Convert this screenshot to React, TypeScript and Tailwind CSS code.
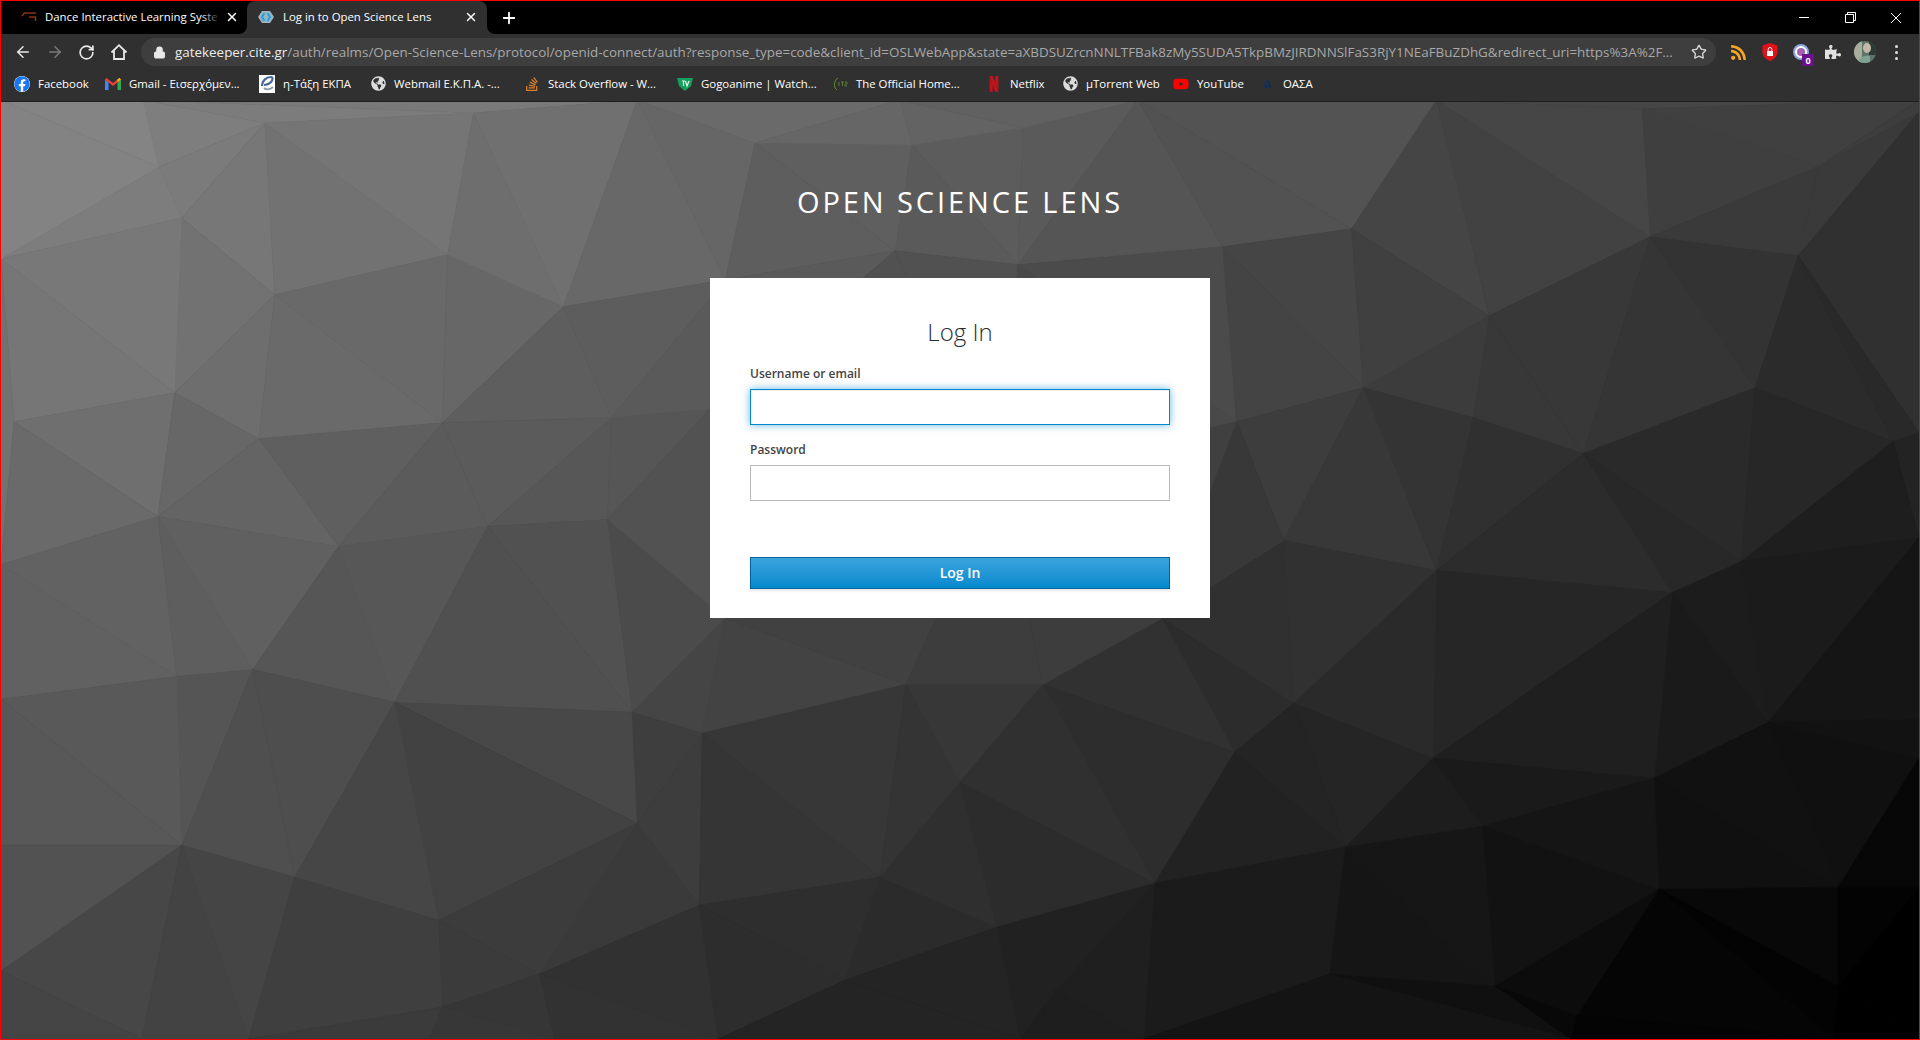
import { ArrowLeft, ArrowRight, RotateCw, Lock, Star, X, Plus } from 'lucide-react';
import { FaFacebook, FaStackOverflow, FaGlobeAmericas, FaRss, FaYoutube, FaPuzzlePiece } from 'react-icons/fa';
import { SiNetflix } from 'react-icons/si';

type Pt = [number, number];

// Corners of the low-poly backdrop, read off the screenshot in page coordinates
const POINTS: Pt[] = [
  [264, 123], [158, 167], [142, 100], [181, 218], [274, 295], [174, 393], [0, 259], [13, 422], [258, 439], [157, 517],
  [0, 565], [176, 677], [0, 700], [252, 670], [338, 547], [442, 423], [447, 255], [473, 113], [637, 100], [563, 307],
  [611, 418], [487, 527], [607, 520], [394, 703], [632, 713], [702, 734], [725, 280], [755, 143], [710, 409], [725, 619],
  [906, 685], [637, 824], [438, 921], [294, 878], [181, 846], [0, 846], [141, 1040], [0, 972], [248, 1040], [442, 1008],
  [539, 975], [699, 906], [880, 878], [845, 981], [718, 1040], [554, 1040], [429, 1040], [912, 145], [895, 251],
  [1023, 128], [1018, 265], [1223, 247], [1352, 229], [1138, 100], [1437, 100], [1490, 316], [1364, 388], [1237, 422],
  [1284, 541], [1474, 418], [1584, 454], [1437, 571], [1651, 237], [1643, 109], [1820, 166], [1920, 112], [1799, 256],
  [1756, 388], [1894, 442], [1920, 433], [1742, 562], [1673, 593], [1920, 538], [1769, 723], [1920, 720], [1655, 779],
  [1433, 759], [1294, 704], [1235, 753], [1043, 685], [1162, 619], [960, 783], [1155, 884], [1346, 848], [1483, 827],
  [1660, 890], [1839, 888], [1920, 759], [1330, 975], [1496, 987], [1578, 1017], [1839, 987], [997, 928], [1055, 993],
  [1021, 1040], [1144, 1040], [1572, 1040], [1835, 1040], [0, 100], [1920, 100], [0, 1040], [1920, 1040], [1920, 888],
  [900, 100], [1000, 480],
];

function facets(points: Pt[]) {
  const all: Pt[] = [...points, [-5000, -5000], [8000, -5000], [960, 9000]];
  const n = points.length;
  let tris: number[][] = [[n, n + 1, n + 2]];

  const inCircle = (t: number[], p: Pt) => {
    const [a, b, c] = t.map((i) => all[i]);
    const d = 2 * (a[0] * (b[1] - c[1]) + b[0] * (c[1] - a[1]) + c[0] * (a[1] - b[1]));
    const a2 = a[0] * a[0] + a[1] * a[1];
    const b2 = b[0] * b[0] + b[1] * b[1];
    const c2 = c[0] * c[0] + c[1] * c[1];
    const x = (a2 * (b[1] - c[1]) + b2 * (c[1] - a[1]) + c2 * (a[1] - b[1])) / d;
    const y = (a2 * (c[0] - b[0]) + b2 * (a[0] - c[0]) + c2 * (b[0] - a[0])) / d;
    return (p[0] - x) ** 2 + (p[1] - y) ** 2 < (a[0] - x) ** 2 + (a[1] - y) ** 2;
  };

  points.forEach((p, i) => {
    const bad = tris.filter((t) => inCircle(t, p));
    const edges = new Map<string, number[]>();
    for (const t of bad) {
      for (const [u, v] of [[t[0], t[1]], [t[1], t[2]], [t[2], t[0]]]) {
        const key = u < v ? `${u}-${v}` : `${v}-${u}`;
        if (edges.has(key)) edges.delete(key);
        else edges.set(key, [u, v]);
      }
    }
    tris = tris.filter((t) => !bad.includes(t));
    for (const [u, v] of edges.values()) tris.push([u, v, i]);
  });

  return tris.filter((t) => t.every((i) => i < n)).map((t) => t.map((i) => all[i]));
}

function Backdrop() {
  const polys = facets(POINTS);
  return (
    <svg className="absolute inset-0 h-full w-full" viewBox="0 102 1920 938" preserveAspectRatio="none">
      <rect x="0" y="0" width="1920" height="1040" fill="#333" />
      {polys.map((p, i) => {
        const cx = (p[0][0] + p[1][0] + p[2][0]) / 3;
        const cy = (p[0][1] + p[1][1] + p[2][1]) / 3;
        const jitter = (((i * 37) % 9) - 4) * 0.55;
        const v = Math.max(0, Math.min(255, Math.round(144.6 - 0.041 * cx - 0.07 * cy + jitter)));
        const fill = `rgb(${v},${v},${v})`;
        return <polygon key={i} points={p.map((q) => q.join(',')).join(' ')} fill={fill} stroke={fill} strokeWidth="0.6" />;
      })}
    </svg>
  );
}

function HomeIcon() {
  return (
    <svg width="18" height="18" viewBox="0 0 18 18" fill="none" stroke="#e8e8e8" strokeWidth="1.8">
      <path d="M1.5 9.5 9 2.2l7.5 7.3M4 7.5V16h10V7.5" />
    </svg>
  );
}

function KeycloakFavicon() {
  return (
    <svg width="16" height="16" viewBox="0 0 16 16">
      <path d="M4 2h8l4 6-4 6H4L0 8z" fill="#9fb4bf" />
      <path d="M6.5 4 4 8l2.5 4M9.5 4 12 8l-2.5 4" fill="none" stroke="#18a4e0" strokeWidth="2" />
    </svg>
  );
}

function DanceFavicon() {
  return (
    <svg width="16" height="16" viewBox="0 0 16 16" fill="none" stroke="#8a3212" strokeWidth="1.6">
      <path d="M15 4H3.5L1 7M8 8h6.5v4" />
    </svg>
  );
}

function GmailIcon() {
  return (
    <svg width="16" height="12" viewBox="0 0 16 12">
      <path d="M0 1.5V12h3.5V4z" fill="#4285f4" />
      <path d="M16 1.5V12h-3.5V4z" fill="#34a853" />
      <path d="M0 1.5 1.5 0 8 5l6.500-5L16 1.500 8 8z" fill="#ea4335" />
      <path d="M12.500 4V1.200L14.500 0 16 1.500z" fill="#fbbc04" />
    </svg>
  );
}

function ETaxiIcon() {
  return (
    <svg width="16" height="18" viewBox="0 0 16 18">
      <rect width="16" height="18" fill="#fff" />
      <path d="M3 11c0-5 4-9 9-9 2 0 2 3 0 5-2 2-5 3-7 3" fill="none" stroke="#47699a" strokeWidth="2.2" />
      <path d="M5 13c2 2 6 2 9-1" fill="none" stroke="#8d9aa8" strokeWidth="1.8" />
    </svg>
  );
}

function GlobeIcon() {
  return <FaGlobeAmericas className="h-[15px] w-[15px] text-[#dcdcdc]" />;
}

function GogoIcon() {
  return (
    <svg width="16" height="16" viewBox="0 0 16 16">
      <path d="M0 2h16l-2 8-6 5-6-5z" fill="#12a05c" />
      <path d="M5 5h3M6.500 5v5M8.500 5l1.500 5 2-5" fill="none" stroke="#e8f5ee" strokeWidth="1.2" />
    </svg>
  );
}

function YtsIcon() {
  return (
    <svg width="16" height="16" viewBox="0 0 16 16" fill="none" stroke="#5f8f34" strokeWidth="1">
      <path d="M6 2C2 4 1 11 5 14" />
      <path d="M7 6v4M9 6h3M10.500 6v4M13 6h2v2h-2v2h2" strokeWidth="0.8" />
    </svg>
  );
}

function OasaIcon() {
  return (
    <div className="flex h-4 w-4 items-center justify-center">
      <span className="font-['Liberation_Sans',sans-serif] text-[13px] leading-none font-bold text-[#0d2f5e]">a</span>
    </div>
  );
}

function ShieldIcon() {
  return (
    <svg width="16" height="18" viewBox="0 0 16 18">
      <path d="M8 0l7.500 2.500V9c0 4-3 7-7.500 9C3.500 16 .5 13 .5 9V2.500z" fill="#e3101a" />
      <path d="M5 8h6v5H5z" fill="#fff" />
      <path d="M6.200 8V6.300a1.800 1.800 0 0 1 3.600 0V8" fill="none" stroke="#fff" strokeWidth="1" />
    </svg>
  );
}

function ProfileAvatar() {
  return (
    <svg width="22" height="22" viewBox="0 0 22 22">
      <defs>
        <clipPath id="avatar-clip"><circle cx="11" cy="11" r="11" /></clipPath>
      </defs>
      <g clipPath="url(#avatar-clip)">
        <rect width="22" height="22" fill="#5f7468" />
        <rect x="0" width="8" height="22" fill="#a9ad9e" />
        <rect x="15" width="7" height="14" fill="#2c3a34" />
        <ellipse cx="13" cy="7" rx="4" ry="5" fill="#c4b8a8" />
        <path d="M4 22c1-6 6-8 12-7v7z" fill="#7ea392" />
      </g>
    </svg>
  );
}

const BOOKMARKS = [
  { label: 'Facebook', icon: <FaFacebook className="h-4 w-4 rounded-full bg-white text-[#1877f2]" />, cls: 'w-[91px]' },
  { label: 'Gmail - Εισερχόμεν...', icon: <GmailIcon />, cls: 'w-[154px]' },
  { label: 'η-Τάξη ΕΚΠΑ', icon: <ETaxiIcon />, cls: 'w-[111px]' },
  { label: 'Webmail Ε.Κ.Π.Α. -...', icon: <GlobeIcon />, cls: 'w-[154px]' },
  { label: 'Stack Overflow - W...', icon: <FaStackOverflow className="h-4 w-4 text-[#d9802e]" />, cls: 'w-[153px]' },
  { label: 'Gogoanime | Watch...', icon: <GogoIcon />, cls: 'w-[155px]' },
  { label: 'The Official Home...', icon: <YtsIcon />, cls: 'w-[154px]' },
  { label: 'Netflix', icon: <SiNetflix className="h-4 w-4 text-[#c5121c]" />, cls: 'w-[76px]' },
  { label: 'µTorrent Web', icon: <GlobeIcon />, cls: 'w-[111px]' },
  { label: 'YouTube', icon: <FaYoutube className="h-4 w-4 text-[#f00]" />, cls: 'w-[86px]' },
  { label: 'ΟΑΣΑ', icon: <OasaIcon />, cls: 'w-[60px]' },
];

function TabStrip() {
  return (
    <div className="flex h-[33px] items-end bg-black">
      <div className="relative flex h-[33px] w-[246px] items-center pb-px pl-[11px]">
        <span className="ml-[9px] flex w-4 items-center justify-center"><DanceFavicon /></span>
        <span className="ml-2 w-[172px] overflow-hidden text-[11.4px] whitespace-nowrap text-white">Dance Interactive Learning System</span>
        <span className="absolute top-0 left-[200px] h-full w-[20px] bg-gradient-to-r from-transparent to-black" />
        <X className="absolute left-[224px] h-[14px] w-[14px] text-white" strokeWidth={2.5} />
      </div>
      <div className="relative flex h-[33px] w-[240px] items-center rounded-t-lg bg-[#303030] pb-px pl-[11px]">
        <span className="absolute bottom-0 -left-2 h-2 w-2 bg-[#303030]"><span className="block h-full w-full rounded-br-lg bg-black" /></span>
        <span className="absolute -right-2 bottom-0 h-2 w-2 bg-[#303030]"><span className="block h-full w-full rounded-bl-lg bg-black" /></span>
        <KeycloakFavicon />
        <span className="ml-[9px] text-[11.4px] whitespace-nowrap text-white">Log in to Open Science Lens</span>
        <X className="absolute left-[217px] h-[14px] w-[14px] text-white" strokeWidth={2.5} />
      </div>
      <div className="flex h-[33px] items-center pl-[13px]">
        <Plus className="h-[18px] w-[18px] text-white" strokeWidth={2.4} />
      </div>
      <div className="ml-auto flex h-[33px] items-center">
        <div className="flex w-[46px] justify-center"><span className="h-px w-[10px] bg-white" /></div>
        <div className="flex w-[46px] justify-center">
          <svg width="11" height="11" viewBox="0 0 11 11" fill="none" stroke="#fff"><path d="M.5 2.500h8v8h-8zM2.500 2.500v-2h8v8h-2" /></svg>
        </div>
        <div className="flex w-[46px] justify-center">
          <svg width="12" height="12" viewBox="0 0 12 12" fill="none" stroke="#fff"><path d="M1 1l10 10M11 1 1 11" /></svg>
        </div>
      </div>
    </div>
  );
}

function Toolbar() {
  return (
    <div className="flex h-[36px] items-center bg-[#303030] pl-[13px]">
      <ArrowLeft className="h-[18px] w-[18px] text-[#e8e8e8]" strokeWidth={2} />
      <ArrowRight className="ml-[14px] h-[18px] w-[18px] text-[#7a7a7a]" strokeWidth={2} />
      <RotateCw className="ml-[14px] h-[17px] w-[17px] text-[#e8e8e8]" strokeWidth={2.4} />
      <span className="ml-[15px] flex"><HomeIcon /></span>
      <div className="ml-[13px] flex h-7 w-[1575px] items-center rounded-full bg-[#3e3e3e] pl-[12px]">
        <Lock className="h-[13px] w-[13px] fill-[#e8e8e8] text-[#e8e8e8]" />
        <span className="ml-[9px] w-[1510px] overflow-hidden pt-px text-[13.41px] whitespace-nowrap text-[#a8a8a8]">
          <span className="text-[#ececec]">gatekeeper.cite.gr</span>/auth/realms/Open-Science-Lens/protocol/openid-connect/auth?response_type=code&amp;client_id=OSLWebApp&amp;state=aXBDSUZrcnNNLTFBak8zMy5SUDA5TkpBMzJIRDNNSlFaS3RjY1NEaFBuZDhG&amp;redirect_uri=https%3A%2F...
        </span>
        <Star className="ml-auto mr-[9px] h-4 w-4 text-[#d8d8d8]" strokeWidth={2} />
      </div>
      <div className="flex flex-1 items-center">
        <FaRss className="ml-[14px] h-[17px] w-[17px] text-[#f5a623]" />
        <span className="ml-[15px] flex"><ShieldIcon /></span>
        <div className="relative ml-[15px] flex h-4 w-4 items-center justify-center rounded-full border-2 border-[#8aa6d8] bg-white">
          <span className="h-2 w-2 rounded-full bg-[#a060b0]" />
          <span className="absolute -right-[7px] -bottom-[8px] flex h-3 w-[12px] items-center justify-center bg-[#6a0f8e] text-[9px] leading-none font-bold text-white">0</span>
        </div>
        <FaPuzzlePiece className="ml-[16px] h-4 w-4 text-[#e0e0e0]" />
        <span className="ml-[13px] flex"><ProfileAvatar /></span>
        <span className="ml-[19px] flex flex-col gap-[3px]">
          <span className="h-[3px] w-[3px] rounded-full bg-[#e0e0e0]" />
          <span className="h-[3px] w-[3px] rounded-full bg-[#e0e0e0]" />
          <span className="h-[3px] w-[3px] rounded-full bg-[#e0e0e0]" />
        </span>
      </div>
    </div>
  );
}

function BookmarksBar() {
  return (
    <div className="flex h-[32px] items-center border-b border-[#1f1f1f] bg-[#303030] pb-[3px] pl-[13px]">
      {BOOKMARKS.map((b) => (
        <div key={b.label} className={`flex items-center ${b.cls}`}>
          <span className="flex w-4 justify-center">{b.icon}</span>
          <span className="ml-2 text-[11.4px] whitespace-nowrap text-white">{b.label}</span>
        </div>
      ))}
    </div>
  );
}

function LoginCard() {
  return (
    <div className="mx-auto mt-[59px] h-[340px] w-[500px] bg-white px-10 pt-[37px]">
      <h1 className="text-center text-2xl leading-[33px] font-light text-[#292e34]">Log In</h1>
      <label className="mt-[17px] block text-xs leading-[18px] font-semibold text-[#444444]">Username or email</label>
      <input
        autoFocus
        className="mt-[6px] block h-9 w-full border border-[#0088ce] bg-white shadow-[inset_0_1px_1px_rgba(3,3,3,0.075),0_0_8px_rgba(0,136,206,0.6)] outline-none"
      />
      <label className="mt-[16px] block text-xs leading-[18px] font-semibold text-[#444444]">Password</label>
      <input type="password" className="mt-[6px] block h-9 w-full border border-[#bbbbbb] bg-white outline-none" />
      <button className="mt-[56px] block h-8 w-full border border-[#00659c] bg-gradient-to-b from-[#39a5dc] to-[#0088ce] text-sm font-semibold text-white shadow-[0_2px_3px_rgba(3,3,3,0.1)]">
        Log In
      </button>
    </div>
  );
}

export default function App() {
  return (
    <div className="flex h-[1040px] w-full flex-col overflow-hidden border border-[#f00] font-['Open_Sans',sans-serif]">
      <TabStrip />
      <Toolbar />
      <BookmarksBar />
      <main className="relative flex-1">
        <Backdrop />
        <div className="relative pt-[82px]">
          <h2 className="text-center text-[29px] leading-[35px] tracking-[0.1em] text-white uppercase">Open Science Lens</h2>
          <LoginCard />
        </div>
      </main>
    </div>
  );
}
